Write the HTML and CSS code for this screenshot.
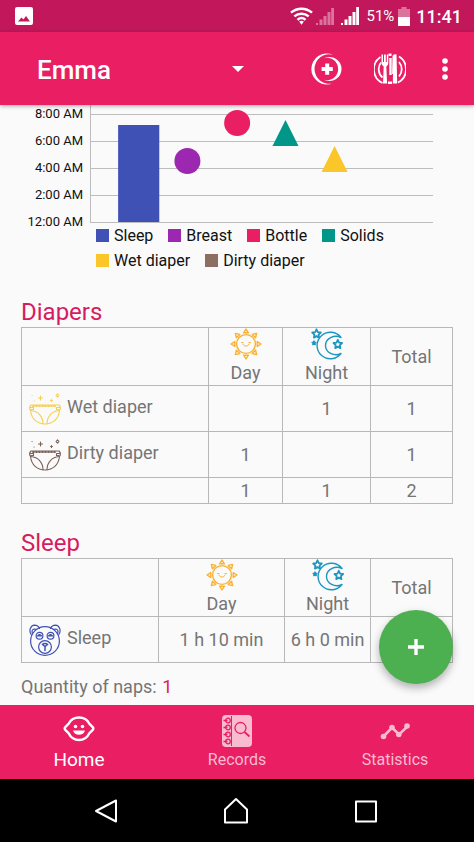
FILE: index.html
```html
<!DOCTYPE html>
<html lang="en">
<head>
<meta charset="utf-8">
<meta name="viewport" content="width=device-width, initial-scale=1">
<title>Emma</title>
<link rel="stylesheet" href="styles.css">
</head>
<body>
<svg class="defs" aria-hidden="true">
  <symbol id="sun" viewBox="0 0 32 32">
    <g fill="none" stroke="currentColor" stroke-width="1.4" stroke-linejoin="round">
      <circle cx="16" cy="16" r="9.4"/>
      <path id="ray" d="M13.6 4.8 16 1l2.4 3.8z"/>
      <use href="#ray" transform="rotate(45 16 16)"/><use href="#ray" transform="rotate(90 16 16)"/>
      <use href="#ray" transform="rotate(135 16 16)"/><use href="#ray" transform="rotate(180 16 16)"/>
      <use href="#ray" transform="rotate(225 16 16)"/><use href="#ray" transform="rotate(270 16 16)"/>
      <use href="#ray" transform="rotate(315 16 16)"/>
      <path d="M13 16.2c.8 2.6 5.2 2.6 6 0M11.5 14.6h1.6M18.9 14.6h1.6" stroke-width="1" stroke-linecap="round"/>
    </g>
  </symbol>
  <symbol id="moon" viewBox="0 0 32 32">
    <g fill="none" stroke="currentColor" stroke-width="1.4" stroke-linejoin="round" stroke-linecap="round">
      <path d="M30 9.500A13.300 13.300 0 1 0 30 25.500C23 29 14.500 24.500 14.500 17.500S23 6 30 9.500z"/>
      <path d="m5.500 1.300 1.300 2.800 3 .4-2.200 2.100.5 3-2.600-1.500-2.600 1.500.5-3L1.200 4.500l3-.4z" stroke-width="1.800"/>
      <path d="m26.800 11.800 1.300 2.800 3 .4-2.200 2.100.5 3-2.600-1.500-2.600 1.500.5-3-2.200-2.100 3-.4z" stroke-width="1.800"/>
      <path d="m3 13 .6 1.200 1.300.2-1 .9.300 1.300L3 16l-1.200.6.3-1.300-1-.9 1.300-.2z" fill="currentColor"/>
    </g>
  </symbol>
  <symbol id="diaper" viewBox="0 0 32 32">
    <g fill="none" stroke="currentColor" stroke-width="1.1" stroke-linecap="round" stroke-linejoin="round">
      <path d="M2 12h28c2 2 1.500 4 .5 5.500C29.500 26 24 31 16 31S2.500 26 1.500 17.500C.5 16 0 14 2 12z"/>
      <path d="M2 17.500c7 .5 12 6 12 13.200M30 17.500c-7 .5-12 6-12 13.200M1 14.500h3.500v2H2M31 14.500h-3.500v2H30"/>
      <path d="M4 13h24" stroke-dasharray="1 2" stroke-width="1.800"/>
      <path d="M11.500 3v4M9.500 5h4M28.500.8l1.500 1.700-1.500 1.700L27 2.500zM22.500 6.600v1.800M21.600 7.500h1.800M3 2.500h.1M5 8h.1"/>
    </g>
  </symbol>
  <symbol id="bear" viewBox="0 0 32 32">
    <g fill="none" stroke="currentColor" stroke-width="1.2" stroke-linecap="round">
      <path d="M2.200 10.500C-.5 6.500 1.500 1.500 5.500 1.200c2.500 0 4.200 1.300 5 3.200M29.800 10.500c2.700-4 .7-9-3.300-9.300-2.500 0-4.200 1.300-5 3.200M3.300 8.800C2.500 6 4 4.200 7.700 5.500M28.700 8.800c.8-2.800-.7-4.600-4.400-3.300"/>
      <circle cx="16" cy="17" r="14.4"/>
      <circle cx="10.500" cy="11.800" r="3.4"/><circle cx="21.500" cy="11.800" r="3.4"/>
      <path d="M8.500 12c1-2 3-2 4 0zM19.500 12c1-2 3-2 4 0z" fill="currentColor"/>
      <circle cx="16" cy="23" r="6.4"/>
      <path d="M13.500 20.500c1-1.200 4-1.200 5 0L16 22.500zM16 22.500v4" stroke-width="1.5"/>
    </g>
  </symbol>
</svg>

<div class="status">
  <svg class="status-photo" viewBox="0 0 18 18" aria-hidden="true"><path fill="#fff" fill-rule="evenodd" d="M2 0h14a2 2 0 0 1 2 2v14a2 2 0 0 1-2 2H2a2 2 0 0 1-2-2V2a2 2 0 0 1 2-2zm1 14.500h12l-4-5.500-2.500 3.500-2-2z"/></svg>
  <div class="status-right">
    <svg class="wifi" viewBox="0 0 24 18" aria-hidden="true"><g fill="none" stroke="#fff" stroke-width="2.6"><path d="M1 5.500c6.500-5.500 15.500-5.500 22 0M4.500 9.400c4.500-3.800 10.500-3.800 15 0M7.800 13c2.500-2.200 5.900-2.200 8.400 0"/></g><path d="M9.500 14.800q2.500-1.800 5 0L12 18z" fill="#fff"/></svg>
    <svg class="signal faded" viewBox="0 0 18 18" aria-hidden="true"><path fill="#fff" d="M0 16h2v2H0zM3.500 12.500h3V18h-3zM7.500 9h3v9h-3zM11.500 5h3v13h-3zM15.200 1H18v17h-2.800z"/></svg>
    <svg class="signal" viewBox="0 0 18 18" aria-hidden="true"><path fill="#fff" d="M0 16h2v2H0zM3.500 12.500h3V18h-3zM7.500 9h3v9h-3zM11.500 5h3v13h-3zM15.200 0H18v18h-2.800z"/></svg>
    <span class="percent">51%</span>
    <svg class="battery" viewBox="0 0 12 19" aria-hidden="true"><path fill="#fff" opacity=".4" d="M3.500 0h5v2H12v8H0V2h3.500z"/><path fill="#fff" d="M0 10h12v9H0z"/></svg>
    <span class="clock">11:41</span>
  </div>
</div>

<header class="appbar">
  <div class="picker">
    <select class="child" aria-label="Child"><option>Emma</option></select>
    <svg class="caret" viewBox="0 0 12 6" aria-hidden="true"><path fill="#fff" d="M0 0h12L6 6z"/></svg>
  </div>
  <button class="icon-btn" aria-label="Health">
    <svg viewBox="0 0 32 32"><g fill="#fff"><path d="M22 1.800A15.500 15.500 0 1 0 22 30.200 14.700 14.700 0 1 1 22 1.800z"/><path d="M13 5.200A12.100 12.100 0 1 1 13 26.800 11.200 11.200 0 1 0 13 5.200z"/><path d="M14.200 10.500h4v3.600h3.600v4h-3.600v3.600h-4v-3.600h-3.600v-4h3.600z"/></g></svg>
  </button>
  <button class="icon-btn" aria-label="Meals">
    <svg viewBox="0 0 32 32"><g fill="none" stroke="#fff" stroke-width="1.8"><path d="M6.500 4a15 15 0 0 0 2 26M25 3.500a15 15 0 0 1-1 26M7 9.500a11 11 0 0 0 1.500 15M25 9a11 11 0 0 1 0 14.500"/><path d="M14.500 1.800h3M14 29.800h4M16.500 5v17" stroke-width="2.400"/></g><path fill="#fff" d="M7.500 1.500H9V9h1V1.500h1.800V9h1V1.500h1.500V10q0 2.500-2 3.500l.8 17H9l.7-17q-2.200-1-2.200-3.500zM18.500 3q1-2.500 4-1.500l.7 29h-4.400l.2-9.500h-.9z"/></svg>
  </button>
  <button class="icon-btn more" aria-label="More options">
    <svg viewBox="0 0 32 32"><g fill="#fff"><circle cx="16" cy="8" r="2.8"/><circle cx="16" cy="16" r="2.8"/><circle cx="16" cy="24" r="2.8"/></g></svg>
  </button>
</header>

<main class="content">
  <section class="chart" aria-label="Daily chart">
    <ul class="axis"><li>8:00 AM</li><li>6:00 AM</li><li>4:00 AM</li><li>2:00 AM</li><li>12:00 AM</li></ul>
    <svg class="plot" aria-hidden="true">
      <g stroke="#bdbdbd" stroke-width="1">
        <path d="M.5 0v122"/>
        <line x2="100%" y1="14.500" y2="14.500"/><line x2="100%" y1="41.500" y2="41.500"/><line x2="100%" y1="68.500" y2="68.500"/><line x2="100%" y1="95.500" y2="95.500"/><line x2="100%" y1="122.500" y2="122.500"/>
      </g>
      <rect x="8.200%" y="25" width="12%" height="97" fill="#3f51b5"/>
      <circle cx="28.400%" cy="61" r="13" fill="#9c27b0"/>
      <circle cx="42.900%" cy="23" r="13" fill="#e91e63"/>
      <svg x="57%" y="20" overflow="visible"><path d="M0 0l13 26h-26z" fill="#009688"/></svg>
      <svg x="71.300%" y="46" overflow="visible"><path d="M0 0l13 26h-26z" fill="#fbc62a"/></svg>
    </svg>
    <ul class="legend">
      <li><i class="swatch sleep"></i>Sleep</li><li><i class="swatch breast"></i>Breast</li><li><i class="swatch bottle"></i>Bottle</li><li><i class="swatch solids"></i>Solids</li><li><i class="swatch wet"></i>Wet diaper</li><li><i class="swatch dirty"></i>Dirty diaper</li>
    </ul>
  </section>

  <section class="block">
    <h2>Diapers</h2>
    <table>
      <colgroup><col><col class="d-day"><col class="d-night"><col class="total"></colgroup>
      <thead><tr><td></td>
        <th scope="col"><svg class="pic sun"><use href="#sun"/></svg>Day</th>
        <th scope="col"><svg class="pic moon"><use href="#moon"/></svg>Night</th>
        <th scope="col">Total</th></tr></thead>
      <tbody>
        <tr class="entry"><th scope="row"><div class="kind"><svg class="pic wet-icon"><use href="#diaper"/></svg><span>Wet diaper</span></div></th><td></td><td>1</td><td>1</td></tr>
        <tr class="entry"><th scope="row"><div class="kind"><svg class="pic dirty-icon"><use href="#diaper"/></svg><span>Dirty diaper</span></div></th><td>1</td><td></td><td>1</td></tr>
        <tr class="sum"><td></td><td>1</td><td>1</td><td>2</td></tr>
      </tbody>
    </table>
  </section>

  <section class="block">
    <h2>Sleep</h2>
    <table>
      <colgroup><col><col class="s-day"><col class="s-night"><col class="total"></colgroup>
      <thead><tr><td></td>
        <th scope="col"><svg class="pic sun"><use href="#sun"/></svg>Day</th>
        <th scope="col"><svg class="pic moon"><use href="#moon"/></svg>Night</th>
        <th scope="col">Total</th></tr></thead>
      <tbody>
        <tr class="entry"><th scope="row"><div class="kind"><svg class="pic bear-icon"><use href="#bear"/></svg><span>Sleep</span></div></th><td>1 h 10 min</td><td>6 h 0 min</td><td></td></tr>
      </tbody>
    </table>
    <p class="naps">Quantity of naps: <b>1</b></p>
  </section>
  <button class="fab" aria-label="Add record"><svg viewBox="0 0 18 18"><path d="M9 1v16M1 9h16" stroke="#fff" stroke-width="3.4"/></svg></button>
</main>

<nav class="tabs">
  <a class="tab active" href="#home"><svg viewBox="0 0 32 32" aria-hidden="true"><path d="M16 5.500c5 0 8.500 2.600 10.200 6l3.500 3.600q1.200 1.400 0 2.800L26.200 21.500C24.500 25 21 28 16 28S7.500 25 5.800 21.500L2.300 17.900q-1.200-1.400 0-2.800l3.500-3.600C7.500 8.100 11 5.500 16 5.500z" transform="translate(0 -3)" fill="none" stroke="#fff" stroke-width="2.400"/><circle cx="12.500" cy="11.500" r="1.800" fill="#fff"/><circle cx="19.500" cy="11.500" r="1.800" fill="#fff"/><path d="M10 15.500h12c-1 3-3 4.300-6 4.300s-5-1.300-6-4.300z" fill="#fff"/></svg>Home</a>
  <a class="tab" href="#records"><svg viewBox="0 0 32 32" aria-hidden="true"><rect x="1" width="30" height="32" rx="4" fill="#f8bbd0"/><path d="M10.500 1v30" stroke="#e91e63" stroke-width="1"/><g fill="none" stroke="#e91e63" stroke-width="1.300"><circle cx="7" cy="5.500" r="2.300"/><circle cx="7" cy="12.500" r="2.300"/><circle cx="7" cy="19.500" r="2.300"/><circle cx="7" cy="26.500" r="2.300"/><path d="M2.500 5.500h4M2.500 12.500h4M2.500 19.500h4M2.500 26.500h4"/><circle cx="19.500" cy="13" r="5.500"/><path d="m23.500 17 5 4.500" stroke-width="1.800"/></g></svg>Records</a>
  <a class="tab" href="#statistics"><svg viewBox="0 0 32 32" aria-hidden="true"><g fill="#f8bbd0"><path d="m4 22 9-9.500 7 7L29 11" fill="none" stroke="#f8bbd0" stroke-width="2.600"/><circle cx="4.500" cy="21.500" r="2.800"/><circle cx="13" cy="12.500" r="2.800"/><circle cx="19.800" cy="19.500" r="2.800"/><circle cx="28" cy="11" r="2.800"/></g></svg>Statistics</a>
</nav>

<div class="sysnav">
  <button aria-label="Back"><svg viewBox="0 0 28 28"><path d="M24 3.500v21L4 14z"/></svg></button>
  <button aria-label="Home screen"><svg viewBox="0 0 28 28"><path d="M3 25.500V12.500L14 2l11 10.500v13z"/></svg></button>
  <button aria-label="Recent apps"><svg viewBox="0 0 28 28"><path d="M4 4.500h20v20H4z"/></svg></button>
</div>
</body>
</html>
```
FILE: styles.css
```css
* { box-sizing: border-box; }
body {
  margin: 0;
  height: 100vh;
  display: flex;
  flex-direction: column;
  background: #fafafa;
  color: #757575;
  font-family: Roboto, "Liberation Sans", sans-serif;
  font-size: 18px;
}
ul { list-style: none; margin: 0; padding: 0; }
button { border: 0; padding: 0; background: none; }
svg { display: block; }
.defs { position: absolute; width: 0; height: 0; }

.status {
  flex: none;
  height: 32px;
  padding: 0 12px 0 15px;
  display: flex;
  align-items: center;
  justify-content: space-between;
  background: #c2185b;
  color: #fff;
}
.status-photo { width: 18px; height: 18px; }
.status-right { display: flex; align-items: center; }
.wifi { width: 23px; height: 18px; margin-right: 3px; }
.signal { width: 18px; height: 18px; margin-right: 7px; }
.faded { opacity: .4; }
.percent { font-size: 15px; }
.battery { width: 12px; height: 19px; margin: 0 6px 0 4px; }
.clock { font-size: 18px; font-weight: 500; }

.appbar {
  flex: none;
  height: 73px;
  padding: 0 13px 0 37px;
  display: flex;
  align-items: center;
  background: #e91e63;
  box-shadow: 0 1px 4px rgba(0, 0, 0, .35);
  z-index: 1;
}
.picker { display: grid; align-items: center; width: 207px; margin-right: auto; }
.child, .caret { grid-area: 1 / 1; }
.child {
  appearance: none;
  border: 0;
  padding: 2px 0 0;
  background: none;
  color: #fff;
  font: 500 26px Roboto, "Liberation Sans", sans-serif;
}
.caret { width: 12px; height: 6px; justify-self: end; pointer-events: none; }
.icon-btn svg { width: 32px; height: 32px; }
.icon-btn + .icon-btn { margin-left: 31px; }
.icon-btn + .more { margin-left: 23px; }

.content { position: relative; flex: 1; min-height: 0; overflow: hidden; }
.chart {
  display: grid;
  grid-template-columns: 83px 1fr;
  column-gap: 7px;
  margin: -5px 41px 0 0;
  color: #111;
}
.axis { height: 122px; text-align: right; font-size: 13px; line-height: 27px; }
.plot { width: 100%; height: 123px; }
.legend {
  grid-column: 2;
  display: flex;
  flex-wrap: wrap;
  column-gap: 15px;
  padding-left: 6px;
  font-size: 16px;
  line-height: 25px;
}
.legend li { display: flex; align-items: center; gap: 5px; }
.swatch { width: 13px; height: 13px; }
.sleep { background: #3f51b5; }
.breast { background: #9c27b0; }
.bottle { background: #e91e63; }
.solids { background: #009688; }
.wet { background: #fbc62a; }
.dirty { background: #8d6e63; }

.block { margin: 24px 21px 0; }
h2 { margin: 0; color: #d81b60; font-size: 24px; font-weight: 400; line-height: 30px; }
table { width: 100%; table-layout: fixed; border-collapse: collapse; line-height: 25px; }
th, td { border: 1px solid #b8b8b8; padding: 0; font-weight: 400; text-align: center; }
thead tr { height: 58px; }
.entry { height: 46px; }
.sum { height: 26px; }
.d-day { width: 74px; }
.d-night { width: 88px; }
.s-day { width: 126px; }
.s-night { width: 86px; }
.total { width: 82px; }
.pic { width: 32px; height: 32px; }
thead .pic { margin: 0 auto; }
.sun { color: #f9b233; }
.moon { color: #1e96c0; }
.wet-icon { color: #f5cf52; }
.dirty-icon { color: #7b6259; }
.bear-icon { color: #3f51b5; }
.kind { display: flex; align-items: center; gap: 6px; padding-left: 7px; }
.kind span { padding-bottom: 5px; }
.naps { margin: 12px 0 0; line-height: 24px; }
.naps b { margin-left: 1px; color: #d81b60; font-weight: 400; }
.fab {
  position: absolute;
  right: 21px;
  bottom: 21px;
  width: 74px;
  height: 74px;
  border-radius: 50%;
  background: #4caf50;
  box-shadow: 0 4px 8px rgba(0, 0, 0, .3);
}
.fab svg { width: 18px; height: 18px; margin: 0 auto; }

.tabs { flex: none; height: 74px; display: flex; background: #e91e63; }
.tab {
  flex: 1;
  display: flex;
  flex-direction: column;
  align-items: center;
  padding-top: 10px;
  color: #f8bbd0;
  font-size: 16px;
  line-height: 26px;
  text-decoration: none;
}
.tab svg { width: 32px; height: 32px; }
.active { color: #fff; font-size: 19px; }

.sysnav {
  flex: none;
  height: 63px;
  padding: 0 43px 0 41px;
  display: flex;
  align-items: center;
  background: #000;
}
.sysnav button { flex: 1; }
.sysnav svg {
  width: 28px;
  height: 28px;
  margin: 0 auto;
  fill: none;
  stroke: #fff;
  stroke-width: 2;
  stroke-linejoin: round;
}
```
